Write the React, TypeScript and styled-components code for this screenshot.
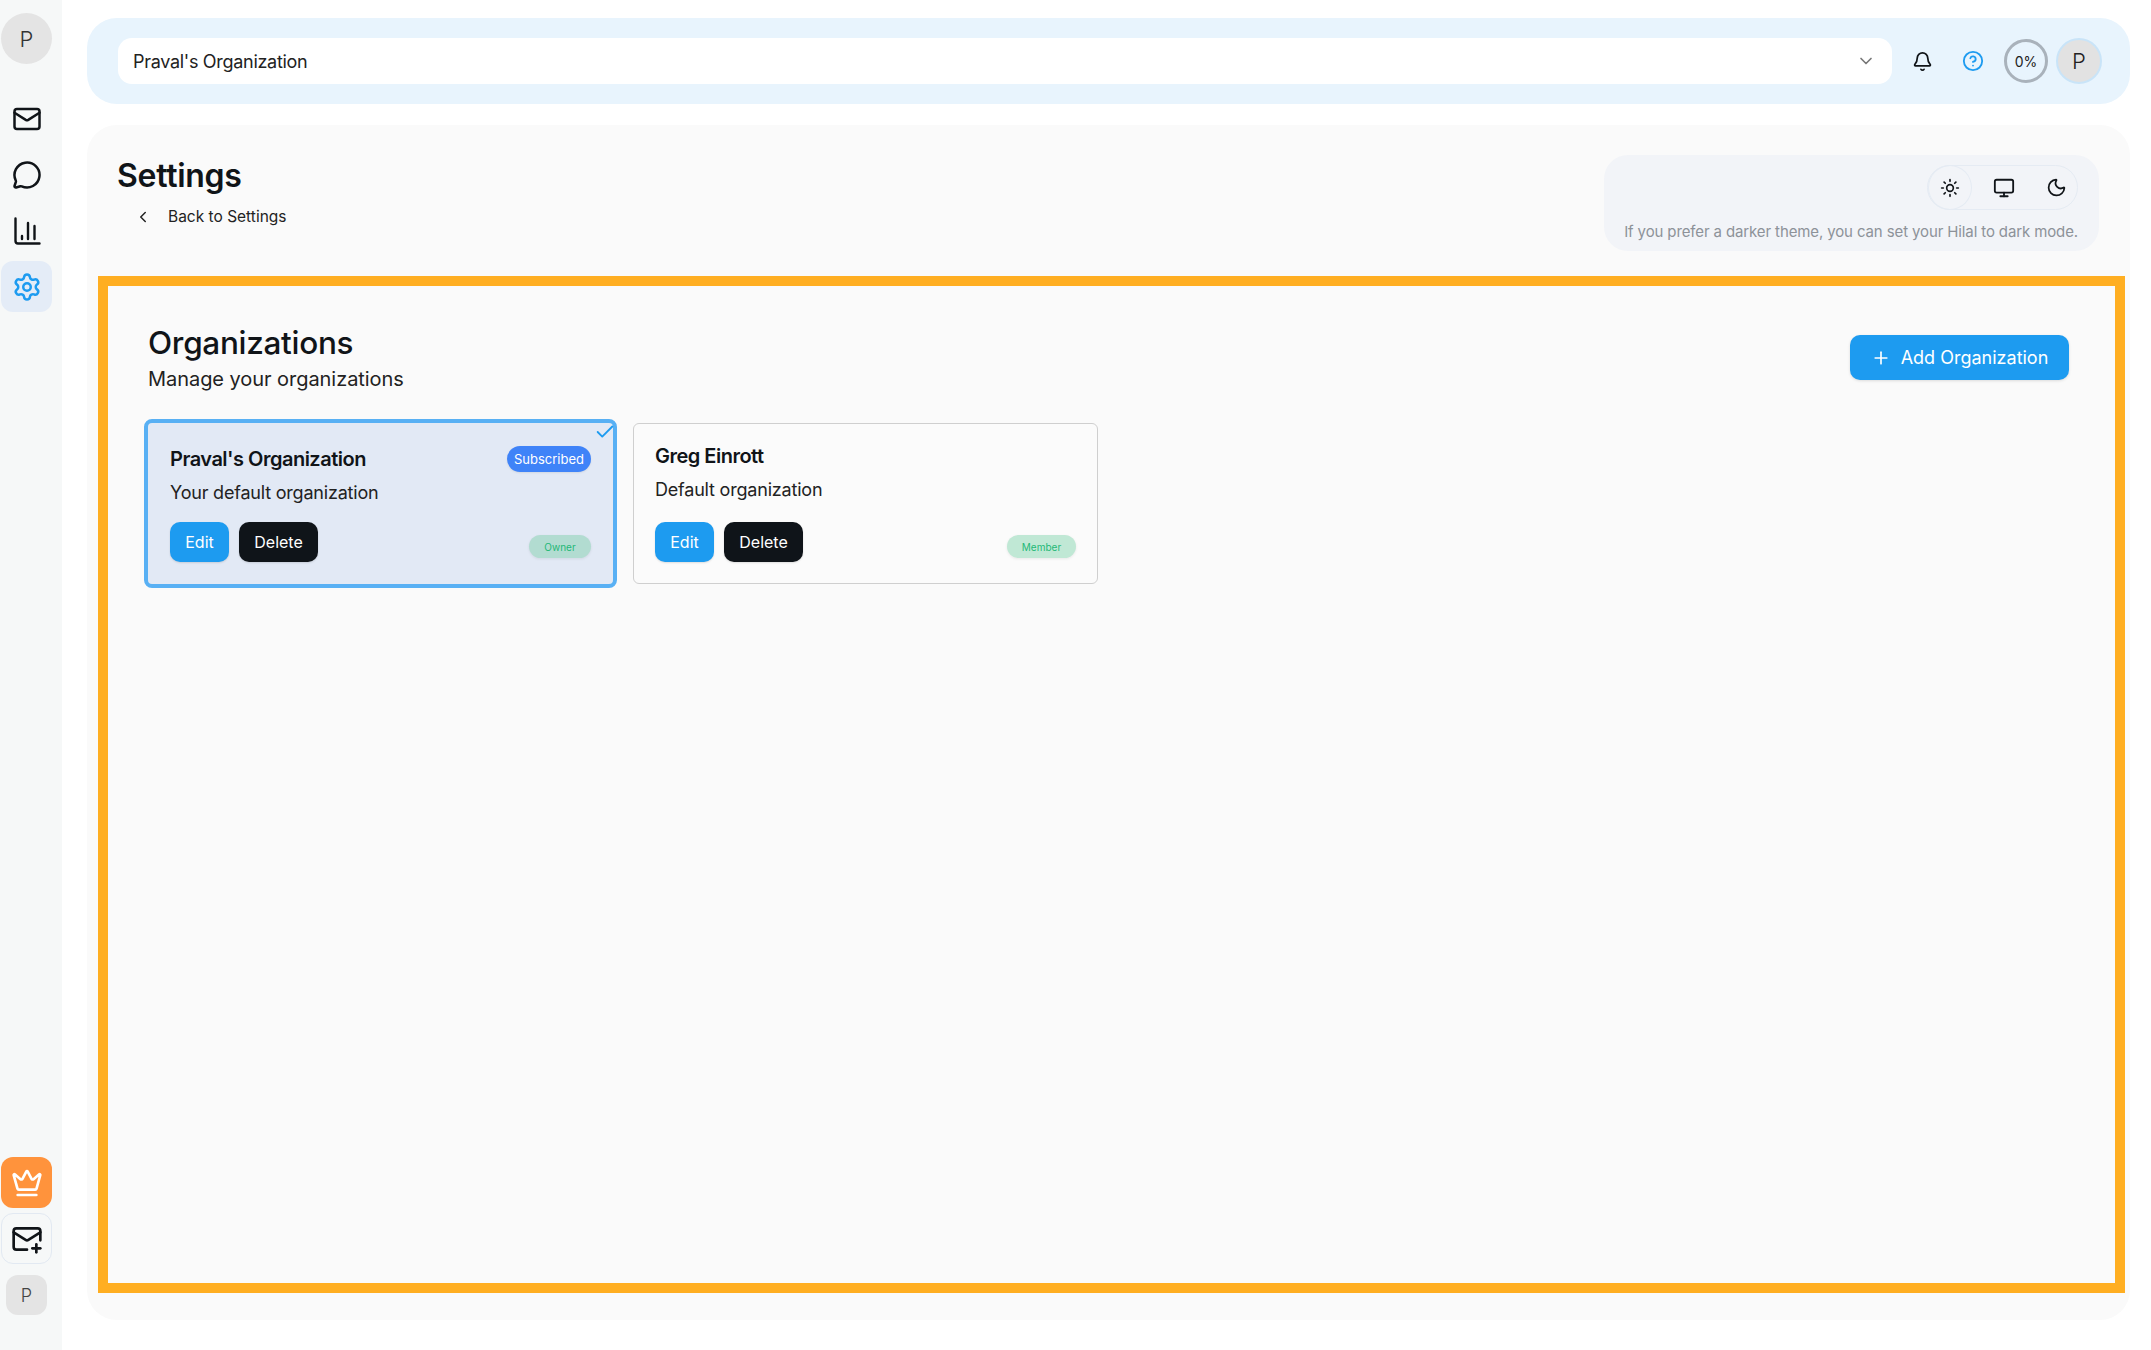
import {
  Bell,
  Check,
  ChevronDown,
  ChevronLeft,
  CircleHelp,
  Crown,
  Mail,
  MailPlus,
  MessageCircle,
  Monitor,
  Moon,
  Plus,
  Settings,
  Sun,
} from 'lucide-react';
import styled, { createGlobalStyle } from 'styled-components';

const GlobalStyle = createGlobalStyle`
  html, body {
    background: #ffffff;
    color: #101418;
    font-family: Inter, "Liberation Sans", sans-serif;
    margin: 0;
  }
`;

const Page = styled.div`
  display: flex;
  height: 1350px;
  overflow: hidden;
  width: 2151px;
`;

const Sidebar = styled.aside`
  background: #f6f8f8;
  box-sizing: border-box;
  display: flex;
  flex-direction: column;
  flex-shrink: 0;
  height: 100%;
  justify-content: space-between;
  padding: 13px 10px 35px 1px;
  width: 62px;
`;

const SideGroup = styled.div`
  align-items: center;
  display: flex;
  flex-direction: column;
  gap: 5px;
`;

const SideAvatar = styled.div`
  align-items: center;
  background: #e4e4e4;
  border-radius: 50%;
  color: #333;
  display: flex;
  font-size: 22px;
  font-weight: 300;
  height: 51px;
  justify-content: center;
  margin-bottom: 24px;
  width: 51px;
`;

const SideTile = styled.div<{ $variant?: 'active' | 'crown' | 'outline' }>`
  align-items: center;
  background: ${(props) =>
    props.$variant === 'active' ? '#e4ecf7' : props.$variant === 'crown' ? '#ff933c' : 'transparent'};
  border: ${(props) => (props.$variant === 'outline' ? '1px solid #e2e9f2' : '1px solid transparent')};
  border-radius: 12px;
  box-sizing: border-box;
  color: ${(props) =>
    props.$variant === 'active' ? '#1d9bf0' : props.$variant === 'crown' ? '#ffffff' : '#101418'};
  display: flex;
  height: 51px;
  justify-content: center;
  width: 51px;
`;

const SideUser = styled.div`
  align-items: center;
  background: #e4e4e4;
  border-radius: 12px;
  color: #444;
  display: flex;
  font-size: 18px;
  font-weight: 300;
  height: 40px;
  justify-content: center;
  margin-top: 6px;
  width: 41px;
`;

const Main = styled.main`
  box-sizing: border-box;
  display: flex;
  flex: 1;
  flex-direction: column;
  gap: 21px;
  height: 100%;
  padding: 18px 21px 30px 25px;
`;

const TopBar = styled.header`
  align-items: center;
  background: #e8f4fd;
  border-radius: 30px;
  display: flex;
  flex-shrink: 0;
  height: 86px;
  padding: 0 28px 0 31px;
`;

const OrgSelect = styled.div`
  align-items: center;
  background: #ffffff;
  border-radius: 14px;
  color: #222;
  display: flex;
  flex: 1;
  font-size: 18px;
  height: 46px;
  justify-content: space-between;
  letter-spacing: -0.3px;
  padding: 0 16px 0 15px;
  svg {
    color: #777;
  }
`;

const TopIcon = styled.div<{ $color: string; $margin: number }>`
  color: ${(props) => props.$color};
  display: flex;
  margin-left: ${(props) => props.$margin}px;
`;

const UsageRing = styled.div`
  align-items: center;
  border: 3px solid #a9b2bb;
  border-radius: 50%;
  box-sizing: border-box;
  color: #222;
  display: flex;
  font-size: 14px;
  height: 44px;
  justify-content: center;
  margin-left: 20px;
  width: 44px;
`;

const TopAvatar = styled.div`
  align-items: center;
  background: #e2e2e2;
  border: 2px solid #c9e4f8;
  border-radius: 50%;
  box-sizing: border-box;
  color: #222;
  display: flex;
  font-size: 22px;
  font-weight: 300;
  height: 46px;
  justify-content: center;
  margin-left: 8px;
  width: 46px;
`;

const Panel = styled.section`
  background: #fafafa;
  border-radius: 30px;
  box-sizing: border-box;
  display: flex;
  flex: 1;
  flex-direction: column;
  padding: 29px 5px 27px 11px;
`;

const PanelHead = styled.div`
  align-items: flex-start;
  display: flex;
  flex-shrink: 0;
  height: 122px;
  justify-content: space-between;
`;

const PageTitle = styled.h1`
  font-size: 32px;
  font-weight: 600;
  letter-spacing: -0.3px;
  line-height: 44px;
  margin: 0 0 0 19px;
`;

const BackLink = styled.div`
  align-items: center;
  color: #222;
  display: flex;
  font-size: 15.5px;
  gap: 16px;
  margin: 9px 0 0 36px;
`;

const ThemeCard = styled.div`
  align-items: flex-end;
  background: #f2f4f8;
  border-radius: 24px;
  box-sizing: border-box;
  display: flex;
  flex-direction: column;
  height: 96px;
  margin: 1px 26px 0 0;
  padding: 10px 21px 0 20px;
  width: 495px;
`;

const ThemeToggle = styled.div`
  align-items: center;
  border: 1px solid #e5ebf3;
  border-radius: 24px;
  box-sizing: border-box;
  display: flex;
  height: 45px;
  width: 151px;
`;

const ThemeOption = styled.div<{ $active?: boolean; $width: number }>`
  align-items: center;
  border: ${(props) => (props.$active ? '1px solid #e5ebf3' : '1px solid transparent')};
  border-radius: 50%;
  box-sizing: border-box;
  color: #101418;
  display: flex;
  flex: 0 0 ${(props) => props.$width}px;
  height: 45px;
  justify-content: center;
`;

const ThemeNote = styled.p`
  color: #8d9299;
  font-size: 15px;
  letter-spacing: -0.12px;
  margin: 12px 0 0;
  white-space: nowrap;
`;

const Highlight = styled.div`
  border: 10px solid #ffae21;
  box-sizing: border-box;
  flex: 1;
  padding: 38px 46px 0 36px;
`;

const SectionHead = styled.div`
  align-items: flex-start;
  display: flex;
  justify-content: space-between;
`;

const SectionText = styled.div`
  padding-left: 4px;
`;

const SectionTitle = styled.h2`
  font-size: 31.5px;
  font-weight: 500;
  letter-spacing: -0.3px;
  line-height: 38px;
  margin: 0;
`;

const SectionSub = styled.p`
  color: #222;
  font-size: 20px;
  letter-spacing: -0.05px;
  line-height: 30px;
  margin: 2px 0 0;
`;

const AddButton = styled.button`
  align-items: center;
  background: #1d9bf0;
  border: 0;
  border-radius: 10px;
  box-shadow: 0 1px 3px rgb(0 0 0 / 12%);
  color: #ffffff;
  display: flex;
  font-family: inherit;
  font-size: 18px;
  gap: 10px;
  height: 45px;
  justify-content: center;
  margin-top: 11px;
  width: 219px;
`;

const CardRow = styled.div`
  align-items: center;
  display: flex;
  gap: 16px;
  margin-top: 25px;
`;

const Card = styled.article<{ $selected?: boolean }>`
  background: ${(props) => (props.$selected ? '#e2e9f5' : '#fbfbfb')};
  border: ${(props) => (props.$selected ? '4px solid #58b0f4' : '1px solid #cfcfcf')};
  border-radius: ${(props) => (props.$selected ? '8px' : '6px')};
  box-sizing: border-box;
  height: ${(props) => (props.$selected ? '169px' : '161px')};
  padding: ${(props) => (props.$selected ? '21px 22px 0 22px' : '17px 21px 0 21px')};
  position: relative;
  width: ${(props) => (props.$selected ? '473px' : '465px')};
`;

const CheckMark = styled.div`
  color: #1d9bf0;
  display: flex;
  position: absolute;
  right: -3px;
  top: -2px;
`;

const CardTop = styled.div`
  align-items: center;
  display: flex;
  justify-content: space-between;
`;

const CardTitle = styled.h3`
  font-size: 20px;
  font-weight: 600;
  letter-spacing: -0.5px;
  line-height: 30px;
  margin: 0;
`;

const CardDesc = styled.p`
  color: #222;
  font-size: 18px;
  letter-spacing: -0.2px;
  line-height: 26px;
  margin: 6px 0 0;
`;

const CardBottom = styled.div<{ $selected?: boolean }>`
  align-items: flex-end;
  display: flex;
  justify-content: space-between;
  margin-top: ${(props) => (props.$selected ? '16px' : '19px')};
`;

const CardActions = styled.div`
  display: flex;
  gap: 10px;
`;

const CardButton = styled.button<{ $dark?: boolean }>`
  background: ${(props) => (props.$dark ? '#0f1419' : '#1d9bf0')};
  border: 0;
  border-radius: 10px;
  box-shadow: 0 1px 2px rgb(0 0 0 / 12%);
  color: #ffffff;
  font-family: inherit;
  font-size: 16px;
  height: 40px;
  padding: 0;
  width: ${(props) => (props.$dark ? '79px' : '59px')};
`;

const Pill = styled.span`
  align-items: center;
  background: #3f83f8;
  border-radius: 13px;
  box-shadow: 0 1px 2px rgb(0 0 0 / 8%);
  color: #ffffff;
  display: flex;
  font-size: 13px;
  height: 26px;
  justify-content: center;
  width: 84px;
`;

const RolePill = styled.span<{ $width: number; $bg: string }>`
  align-items: center;
  background: ${(props) => props.$bg};
  border-radius: 12px;
  box-shadow: 0 1px 3px rgb(0 0 0 / 8%);
  color: #1fb877;
  display: flex;
  font-size: 10px;
  height: 23px;
  justify-content: center;
  margin-bottom: 4px;
  width: ${(props) => props.$width}px;
`;

// bars sit closer to the axis than lucide's chart-column
const ChartIcon = () => (
  <svg width="30" height="30" viewBox="0 0 30 30" fill="none" stroke="currentColor" strokeLinecap="round" strokeLinejoin="round" strokeWidth="2.4">
    <path d="M3.5 2.5V25a2.5 2.5 0 0 0 2.5 2.5h21.5" />
    <path d="M10 23v-3" />
    <path d="M16 23V7" />
    <path d="M22.5 23V10" />
  </svg>
);

export default function App() {
  return (
    <Page>
      <GlobalStyle />
      <Sidebar>
        <SideGroup>
          <SideAvatar>P</SideAvatar>
          <SideTile>
            <Mail size={30} strokeWidth={2} />
          </SideTile>
          <SideTile>
            <MessageCircle size={30} strokeWidth={2} />
          </SideTile>
          <SideTile>
            <ChartIcon />
          </SideTile>
          <SideTile $variant="active">
            <Settings size={30} strokeWidth={2} />
          </SideTile>
        </SideGroup>
        <SideGroup>
          <SideTile $variant="crown">
            <Crown size={32} strokeWidth={2} />
          </SideTile>
          <SideTile $variant="outline">
            <MailPlus size={32} strokeWidth={2} />
          </SideTile>
          <SideUser>P</SideUser>
        </SideGroup>
      </Sidebar>
      <Main>
        <TopBar>
          <OrgSelect>
            Praval's Organization
            <ChevronDown size={20} strokeWidth={2} />
          </OrgSelect>
          <TopIcon $color="#101418" $margin={20}>
            <Bell size={21} strokeWidth={2} />
          </TopIcon>
          <TopIcon $color="#1d9bf0" $margin={29}>
            <CircleHelp size={22} strokeWidth={2} />
          </TopIcon>
          <UsageRing>0%</UsageRing>
          <TopAvatar>P</TopAvatar>
        </TopBar>
        <Panel>
          <PanelHead>
            <div>
              <PageTitle>Settings</PageTitle>
              <BackLink>
                <ChevronLeft size={18} strokeWidth={2} />
                Back to Settings
              </BackLink>
            </div>
            <ThemeCard>
              <ThemeToggle>
                <ThemeOption $active $width={44}>
                  <Sun size={20} strokeWidth={2} />
                </ThemeOption>
                <ThemeOption $width={63}>
                  <Monitor size={22} strokeWidth={2} />
                </ThemeOption>
                <ThemeOption $width={42}>
                  <Moon size={21} strokeWidth={2} />
                </ThemeOption>
              </ThemeToggle>
              <ThemeNote>If you prefer a darker theme, you can set your Hilal to dark mode.</ThemeNote>
            </ThemeCard>
          </PanelHead>
          <Highlight>
            <SectionHead>
              <SectionText>
                <SectionTitle>Organizations</SectionTitle>
                <SectionSub>Manage your organizations</SectionSub>
              </SectionText>
              <AddButton>
                <Plus size={20} strokeWidth={2} />
                Add Organization
              </AddButton>
            </SectionHead>
            <CardRow>
              <Card $selected>
                <CheckMark>
                  <Check size={22} strokeWidth={2} />
                </CheckMark>
                <CardTop>
                  <CardTitle>Praval's Organization</CardTitle>
                  <Pill>Subscribed</Pill>
                </CardTop>
                <CardDesc>Your default organization</CardDesc>
                <CardBottom $selected>
                  <CardActions>
                    <CardButton>Edit</CardButton>
                    <CardButton $dark>Delete</CardButton>
                  </CardActions>
                  <RolePill $width={62} $bg="#b2dcd1">Owner</RolePill>
                </CardBottom>
              </Card>
              <Card>
                <CardTop>
                  <CardTitle>Greg Einrott</CardTitle>
                </CardTop>
                <CardDesc>Default organization</CardDesc>
                <CardBottom>
                  <CardActions>
                    <CardButton>Edit</CardButton>
                    <CardButton $dark>Delete</CardButton>
                  </CardActions>
                  <RolePill $width={69} $bg="#c0e8d5">Member</RolePill>
                </CardBottom>
              </Card>
            </CardRow>
          </Highlight>
        </Panel>
      </Main>
    </Page>
  );
}
